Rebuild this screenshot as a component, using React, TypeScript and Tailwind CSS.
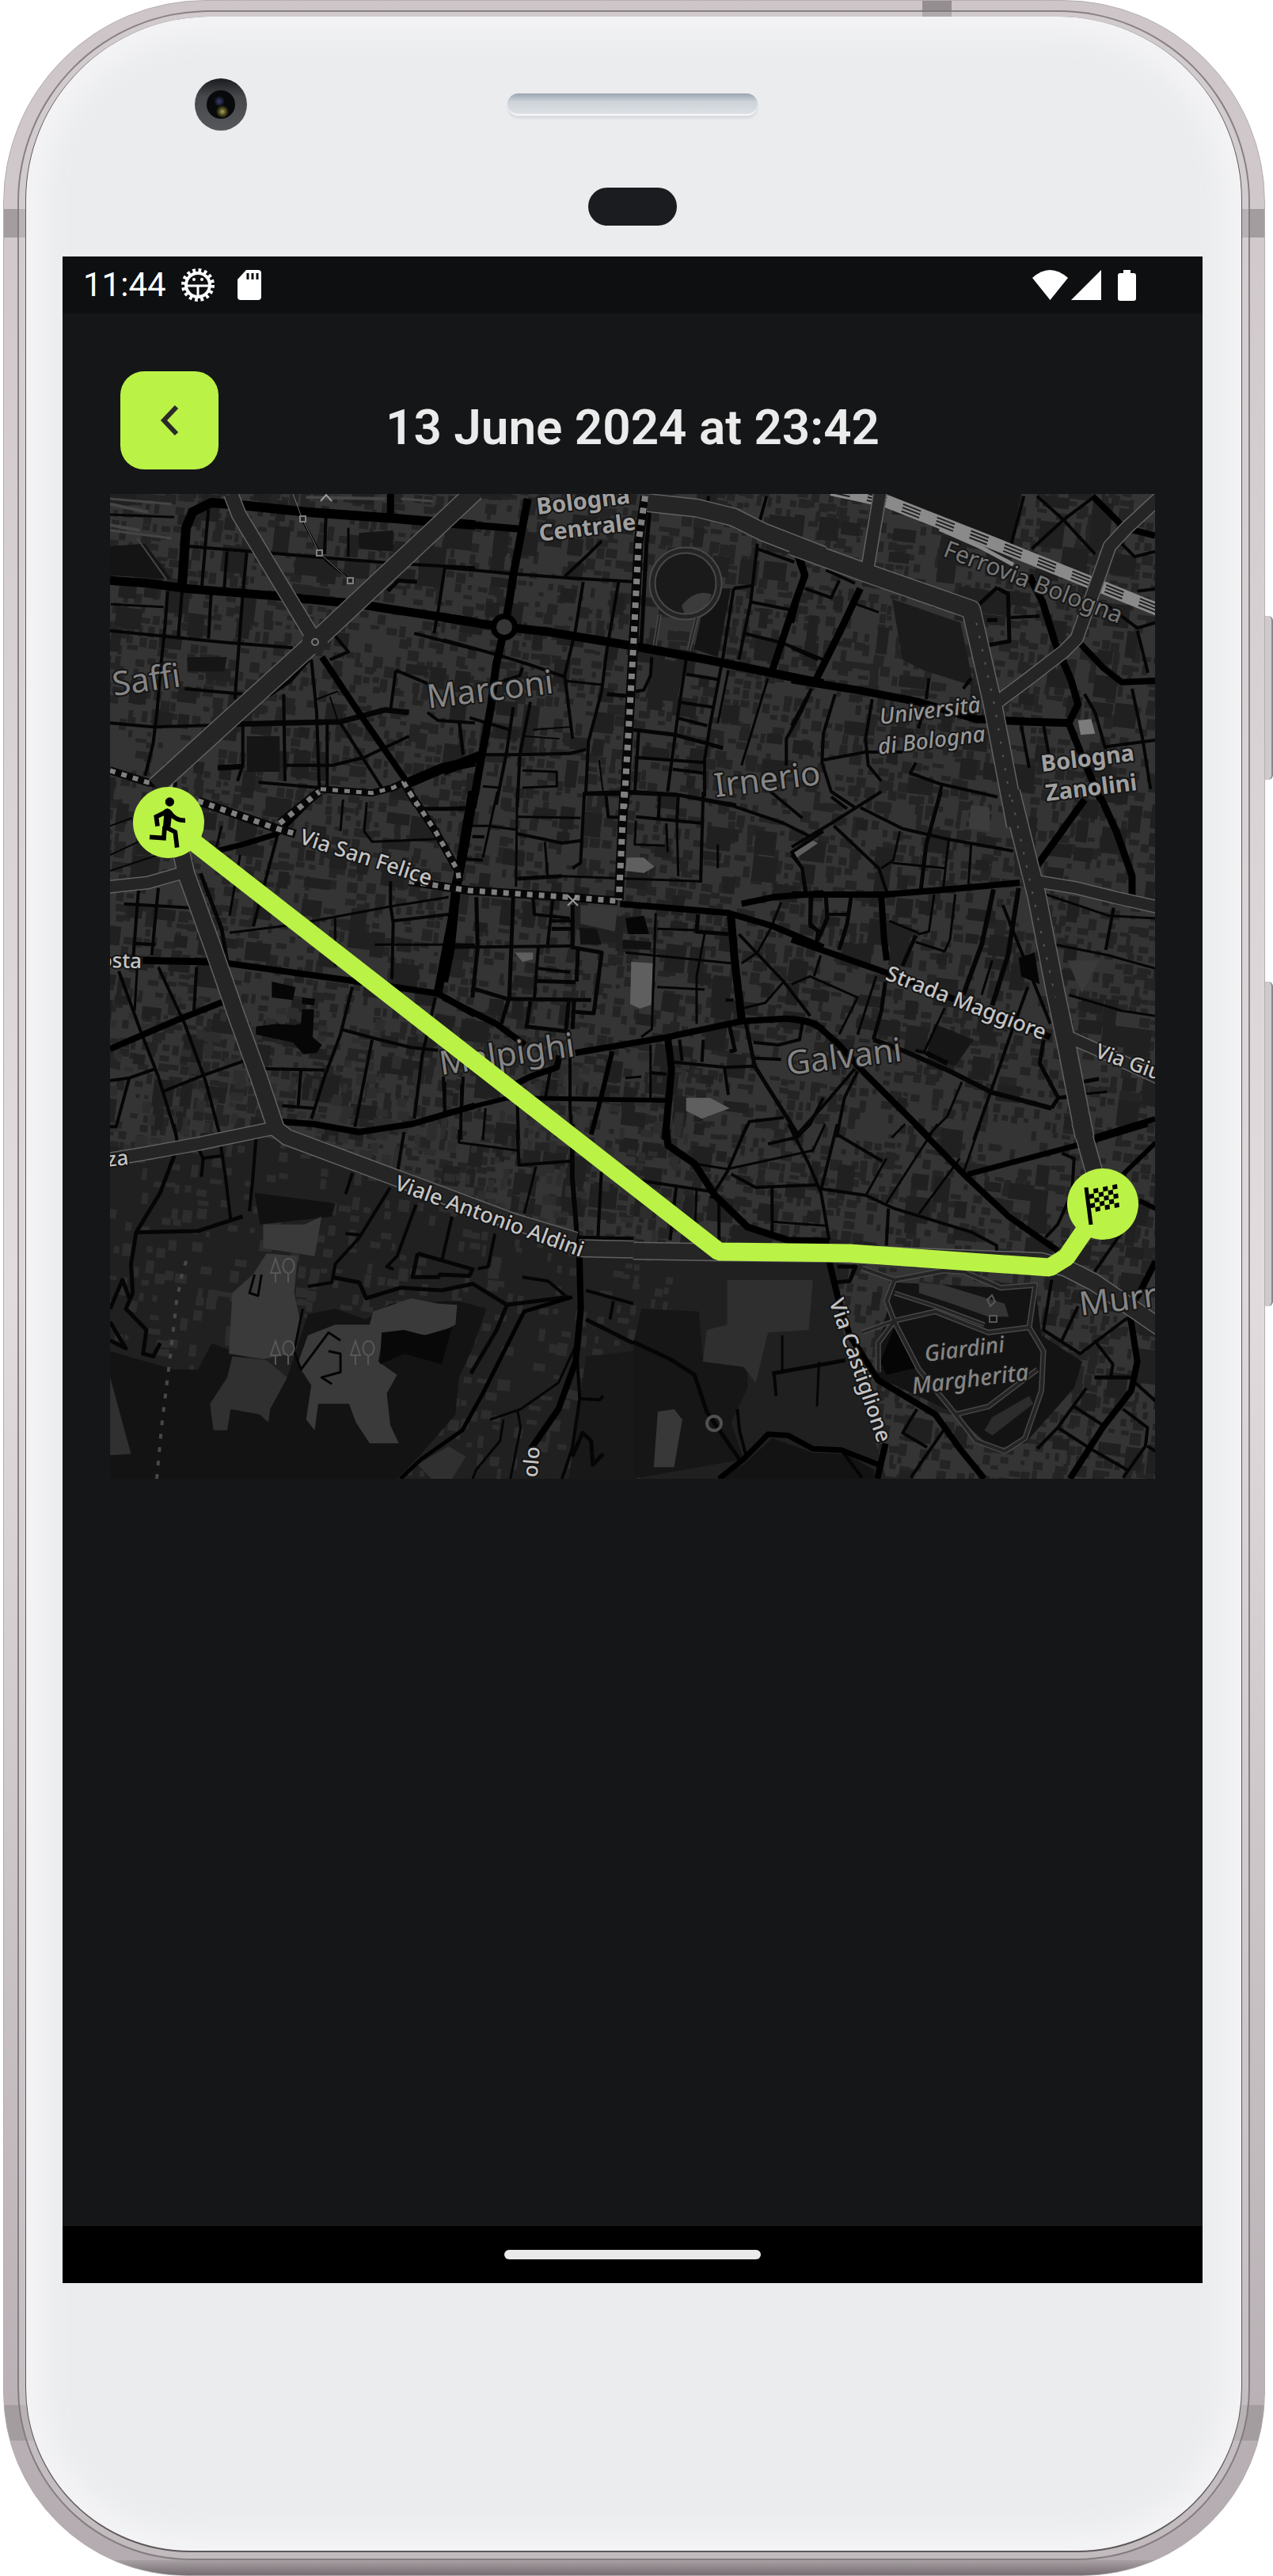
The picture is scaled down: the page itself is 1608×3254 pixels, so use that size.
import React from 'react';

type Tile = [number, number, number, number];
type Line = [Tile, number, string];

// Survey sheets: origin x, origin y, units per pixel across, units per pixel down.
const A: Tile = [-19, -24, 3, 3];
const B: Tile = [421, -24, 3, 3];
const C: Tile = [861, -24, 3, 3];
const D: Tile = [-19, 376, 3, 3];
const E: Tile = [421, 376, 3, 3];
const F: Tile = [861, 376, 3, 3];
const G: Tile = [-19, 796, 2.306, 3];
const H: Tile = [661, 796, 1.94, 3];

const toPoints = ([ox, oy, sx, sy]: Tile, pts: string) =>
  pts
    .split(' ')
    .map((p) => {
      const [x, y] = p.split(',').map(Number);
      return `${(x / sx + ox).toFixed(1)},${(y / sy + oy).toFixed(1)}`;
    })
    .join(' ');

const majorRoads: Line[] = [
  [A, 11, '57,400 200,410 340,430 700,460 1000,490 1440,558'],
  [A, 12, '330,420 345,200 370,140 440,105 560,115 800,140 1140,165 1440,190'],
  [A, 9, '1120,72 1120,160'],
  [A, 8, '860,690 1000,900 1180,1160'],
  [A, 13, '1180,1170 1320,1110 1440,1085'],
  [B, 11, '0,540 150,565 230,575 400,595 700,645 1000,700 1440,790'],
  [B, 9, '0,180 290,205'],
  [B, 10, '320,90 265,380 250,480 232,580 200,720 180,880 150,1040 110,1260'],
  [B, 13, '0,1120 140,1065'],
  [B, 9, '1350,310 1370,380 1320,520 1240,760'],
  [C, 10, '0,775 250,815 480,860 700,925 900,935 1050,940'],
  [C, 9, '260,430 180,600 90,780'],
  [C, 6, '20,310 45,380 0,560'],
  [C, 9, '900,380 950,480 1000,640 1060,780 1085,870 1050,940 1090,1040 1170,1230'],
  [C, 8, '1085,630 1180,730 1250,785 1377,780'],
  [C, 8, '1140,80 1260,200 1377,230'],
  [D, 11, '1430,0 1380,300 1350,500 1300,760'],
  [D, 8, '500,650 960,715 1300,765 1440,845'],
  [D, 8, '57,975 300,870 490,795'],
  [D, 9, '180,640 440,645'],
  [D, 8, '700,1250 830,1260 1000,1290 1200,1260 1440,1190'],
  [D, 7, '400,240 560,200 690,160 850,0'],
  [E, 12, '115,0 80,200 50,350 25,600 0,720'],
  [E, 8, '670,425 1080,460 1250,510 1440,590'],
  [E, 8, '1130,425 1250,400 1440,385'],
  [E, 10, '1090,470 1105,650 1130,860'],
  [E, 8, '500,990 850,930 1130,870 1300,860 1380,870 1440,900'],
  [E, 9, '850,930 865,1050 840,1320'],
  [E, 8, '0,780 200,880 310,960'],
  [E, 6, '0,1220 250,1160 850,1170'],
  [E, 8, '250,1120 330,1080 430,1045 440,1000'],
  [E, 6, '640,985 600,1150 560,1300'],
  [F, 8, '0,560 370,690 980,930'],
  [F, 8, '0,390 350,390 600,370 865,345'],
  [F, 8, '0,860 90,880 180,960 270,1060 520,1310'],
  [F, 9, '1110,30 930,280'],
  [F, 9, '1170,20 1230,150 1290,320 1290,400'],
  [F, 8, '340,400 350,560 360,640'],
  [F, 7, '1150,1310 1377,1240'],
  [G, 8, '1410,440 1415,700 1400,900 1350,1080 1270,1230'],
  [G, 5, '890,1344 950,1270 1070,1160 1130,1020 1250,710 1390,655'],
  [H, 8, '690,0 810,190 920,350 1040,480'],
  [H, 7, '820,190 1100,75 1260,0'],
  [H, 9, '80,0 85,80 150,150 200,270 280,390 380,440 480,445'],
  [H, 8, '480,520 500,650 530,800 600,970 740,1100 800,1230 860,1344'],
  [H, 7, '210,1344 270,1270 330,1175 380,1180 440,1230 510,1235 600,1290'],
  [H, 8, '598,1344 618,1210'],
  [H, 8, '1280,520 1240,640 1215,700 1235,900 1220,1010 1150,1150 1070,1344'],
  [H, 6, '1280,70 1200,190'],
  [H, 6, '1240,290 1280,320'],
];

const minorRoads: Line[] = [
  [A, 4, '350,270 600,290 950,320 1140,335 1440,352'],
  [A, 4, '430,130 405,420'], [A, 4, '500,290 490,430'], [A, 4, '575,295 560,450 530,850'],
  [A, 4, '875,160 870,300'], [A, 3, '960,200 960,310'], [A, 3, '870,320 970,400'],
  [A, 3, '780,160 850,290'], [A, 4, '57,590 300,615 500,635 750,655'],
  [A, 4, '275,440 265,580 250,720 235,900 220,1020 190,1140'],
  [A, 4, '330,440 315,620'], [A, 4, '440,450 430,620'], [A, 4, '340,810 560,830'],
  [A, 4, '57,940 220,955 560,945'], [A, 7, '500,945 720,940 930,935 1100,890 1190,900'],
  [A, 5, '660,835 740,780 810,700'], [A, 4, '715,830 720,1160'], [A, 4, '820,700 840,900 850,1190'],
  [A, 4, '560,950 560,1100 540,1160'], [A, 7, '465,1110 560,1105'], [A, 4, '725,1100 900,1100 1020,1070 1190,990'],
  [A, 4, '930,940 1090,1190'], [A, 4, '880,940 880,1190'], [A, 4, '620,1165 850,1185'],
  [A, 4, '1325,355 1300,520 1285,600'], [A, 4, '910,610 960,670 890,700'], [A, 4, '900,600 990,520'],
  [A, 4, '1210,600 1440,660'], [A, 4, '1140,740 1120,890'], [A, 4, '1140,740 1260,790'],
  [A, 4, '1260,900 1300,930 1440,940'], [A, 4, '1380,930 1395,1060'], [A, 5, '1110,440 1150,400 1220,405'],
  [A, 2, '840,850 920,820'], [A, 2, '890,840 920,930'], [A, 3, '60,490 260,500'], [A, 3, '57,150 300,160'],
  [B, 4, '0,350 270,375 470,390 730,405'], [B, 4, '460,385 540,310 600,250'], [B, 4, '530,405 500,590 460,760 490,1000'],
  [B, 4, '665,400 620,660 600,820 550,1010 540,1200'], [B, 4, '0,625 200,680 330,720 460,765'],
  [B, 3, '460,780 600,795'], [B, 5, '620,830 700,838'], [B, 4, '790,690 785,760 760,815 730,820'],
  [B, 5, '785,110 770,260 750,640'], [B, 4, '920,700 890,900 870,1050 850,1200'],
  [B, 4, '1190,260 1165,480 1120,700'], [B, 4, '1100,430 1060,690 1010,950 990,1080 990,1220'],
  [B, 4, '1100,430 1170,420'], [B, 4, '1160,480 1310,510'], [B, 4, '1140,600 1280,635 1440,700'],
  [B, 4, '1190,280 1330,330'], [B, 3, '1080,740 1040,940'], [B, 3, '1230,770 1130,1100'],
  [B, 4, '1395,810 1360,890 1300,1000 1300,1100'], [B, 4, '920,755 1040,775'], [B, 4, '890,860 1020,880'],
  [B, 4, '885,920 1000,950'], [B, 5, '720,965 880,985 990,1015 1060,1035'], [B, 4, '740,970 725,1210'],
  [B, 4, '725,1070 990,1090'], [B, 4, '870,1115 990,1130'], [B, 4, '540,1205 720,1200 880,1210 1110,1250'],
  [B, 4, '150,1060 290,1060 480,1055 540,1040'], [B, 4, '265,880 240,1050 200,1250'], [B, 4, '330,860 290,1060 280,1260'],
  [B, 4, '60,930 75,1060'], [B, 4, '100,920 250,965'], [B, 3, '300,1120 430,1125 430,1180 300,1185'],
  [B, 3, '150,1180 210,1185'], [B, 2, '310,990 440,1000'], [B, 2, '340,965 480,955'], [B, 2, '590,1080 605,1200'],
  [B, 4, '1005,80 1000,120'], [B, 4, '1225,80 1195,190'], [B, 4, '300,730 290,760 200,790'],
  [C, 4, '880,80 830,270'], [C, 4, '930,80 1030,170 1150,300'], [C, 4, '1150,80 1030,170 910,280'],
  [C, 4, '1250,260 1300,310 1377,290'], [C, 4, '830,540 940,535'], [C, 5, '780,430 820,450 825,630 745,645'],
  [C, 5, '780,425 700,500'], [C, 5, '740,550 780,550'], [C, 4, '0,655 100,700'],
  [C, 4, '75,810 0,950'], [C, 4, '165,830 120,980 115,1090 150,1200 240,1260'],
  [C, 4, '305,850 280,1000 290,1100 340,1160'], [C, 4, '120,1080 280,1050 420,1050'],
  [C, 4, '520,770 510,850'], [C, 4, '510,860 480,960'], [C, 4, '470,1090 450,1130 560,1170 780,1220'],
  [C, 4, '570,1170 550,1260'], [C, 4, '870,950 900,1110'], [C, 4, '955,950 980,1090'],
  [C, 4, '1110,830 1150,900 1190,1040'], [C, 4, '1190,1030 1377,1005'], [C, 4, '1290,810 1330,1000 1360,1190'],
  [C, 4, '1310,590 1350,750'], [C, 4, '1190,490 1310,580 1377,560'], [C, 4, '1310,440 1377,432'],
  [C, 3, '230,485 330,520'], [C, 4, '130,360 240,410'], [C, 4, '50,430 150,465 180,400'], [C, 4, '650,810 680,770'],
  [D, 3, '550,240 510,470'], [D, 4, '690,170 600,510'], [D, 5, '400,310 480,520 500,640'],
  [D, 4, '110,425 360,440'], [D, 4, '165,370 145,630'], [D, 4, '240,365 215,620'], [D, 4, '150,575 230,580'],
  [D, 4, '90,680 170,900 240,1080 310,1310'], [D, 4, '240,665 340,880 420,1100 470,1290'],
  [D, 4, '385,665 375,830'], [D, 3, '160,670 150,830'], [D, 4, '57,1095 130,1085 230,1050'],
  [D, 4, '130,1085 80,1270 57,1270'], [D, 4, '260,1135 410,1075 580,1015'],
  [D, 4, '640,1050 870,1055'], [D, 4, '780,1055 770,1190'], [D, 4, '975,740 930,920 870,1080 820,1240'],
  [D, 4, '930,900 1060,935 1200,970 1300,980'], [D, 4, '1050,940 985,1270'], [D, 4, '1290,780 1240,1000 1210,1240'],
  [D, 4, '710,1190 830,1200'], [D, 4, '1120,340 1120,430 1130,500 1125,710'], [D, 3, '510,535 750,505 1120,435 1340,400'],
  [D, 4, '1130,490 1340,465'], [D, 3, '910,480 910,660'], [D, 3, '940,30 930,150'], [D, 3, '1030,40 1020,150 1050,190 1290,180'],
  [D, 5, '1240,65 1400,65'], [D, 4, '1320,1080 1325,1200'], [D, 4, '1395,1080 1390,1190'], [D, 3, '480,130 460,210'],
  [D, 3, '1060,580 1440,580'], [D, 2, '57,130 140,100'], [D, 2, '57,240 250,150'], [D, 2, '57,300 300,220'],
  [E, 4, '0,65 90,60'], [E, 3, '205,0 150,250'], [E, 3, '280,0 275,360'], [E, 3, '80,130 170,130 280,145'],
  [E, 3, '280,95 520,100'], [E, 4, '280,160 380,180 450,195 525,185'], [E, 4, '535,0 520,270 490,290'],
  [E, 4, '110,170 155,172'], [E, 4, '80,255 150,260'], [E, 3, '385,190 395,320'], [E, 5, '280,330 450,320'],
  [E, 3, '450,320 970,340'], [E, 4, '615,0 625,95 680,100'], [E, 4, '535,10 680,10'], [E, 4, '985,0 975,345'],
  [E, 4, '730,95 985,120'], [E, 4, '820,10 815,100'], [E, 4, '890,20 885,105'], [E, 3, '730,110 725,200 840,205'],
  [E, 3, '845,120 850,230'], [E, 3, '885,110 890,320'], [E, 4, '700,5 900,15 1100,55 1290,120 1390,170'],
  [E, 4, '1240,0 1360,100'], [E, 4, '1440,150 1320,230 1360,290 1375,380'], [E, 3, '1040,200 1040,290'],
  [E, 5, '125,400 130,590 110,780'], [E, 5, '265,400 250,780 220,880'], [E, 4, '340,400 345,465 480,480'],
  [E, 4, '415,410 395,580'], [E, 5, '490,430 490,590 600,610 570,840 500,835'], [E, 5, '410,520 490,520'],
  [E, 4, '410,490 490,490'], [E, 4, '0,590 490,585'], [E, 4, '360,590 345,780'], [E, 4, '360,670 480,685'],
  [E, 5, '355,718 500,722'], [E, 5, '510,600 505,720'], [E, 5, '110,745 240,785 560,790'],
  [E, 5, '330,795 315,890 480,910'], [E, 5, '475,790 465,900'], [E, 5, '495,790 490,900'],
  [E, 3, '805,460 790,900 750,930'], [E, 5, '965,465 960,530 1080,540'], [E, 3, '810,520 960,525'],
  [E, 3, '690,610 1090,650'], [E, 3, '810,740 990,750'], [E, 3, '990,540 960,700 960,880'],
  [E, 4, '1100,790 1070,790'], [E, 4, '895,940 905,1020'], [E, 4, '985,940 980,1025'], [E, 5, '1085,890 1105,980 1085,985'],
  [E, 4, '875,1025 1070,1045 1180,1040'], [E, 4, '1065,1045 1080,1150'], [E, 5, '1145,870 1180,1040 1230,1120 1350,1310'],
  [E, 4, '1175,950 1270,960 1350,940 1360,880'], [E, 4, '1180,1010 1280,1015'], [E, 4, '1440,1160 1390,1260 1330,1320'],
  [E, 4, '1130,1310 1160,1250 1290,1235'], [E, 3, '785,960 785,1170'], [E, 4, '785,1065 845,1070'], [E, 3, '690,1085 750,1080'],
  [E, 4, '480,1000 480,1200 490,1320'], [E, 4, '405,1060 385,1170'], [E, 4, '280,1170 285,1320'], [E, 4, '70,1110 65,1320'],
  [E, 3, '160,1200 150,1320'], [E, 4, '5,1100 5,1230'], [E, 4, '1120,540 1290,720 1390,850'], [E, 3, '1130,650 1190,610 1240,520 1280,420'],
  [E, 3, '1140,820 1220,800 1290,720'], [E, 4, '1390,400 1390,510 1430,530 1410,580'],
  [F, 4, '150,20 210,65'], [F, 4, '0,210 150,120 340,0'], [F, 4, '160,130 330,290 360,380'],
  [F, 4, '260,60 420,140 590,180 840,225'], [F, 5, '565,0 510,200 490,370'], [F, 3, '410,150 385,260 340,290'],
  [F, 3, '595,180 575,360'], [F, 3, '680,200 670,350'], [F, 3, '380,270 580,290'], [F, 4, '0,240 40,290 50,380'],
  [F, 5, '75,400 70,500 100,530 95,570'], [F, 5, '130,400 135,480 100,560'], [F, 4, '130,465 210,465'],
  [F, 5, '225,400 210,500 180,600'], [F, 3, '540,390 520,530 480,540'], [F, 3, '620,390 600,560 580,605 470,570'],
  [F, 3, '370,490 480,535'], [F, 5, '470,545 420,660'], [F, 6, '765,370 720,580 650,770'], [F, 6, '860,365 820,620 760,810'],
  [F, 3, '110,620 85,700'], [F, 3, '0,730 70,700 250,780 180,920'], [F, 3, '320,700 250,920'], [F, 5, '355,720 340,830 310,940'],
  [F, 6, '310,940 430,985 600,1060 760,1140 985,1200'], [F, 3, '580,820 500,990'], [F, 6, '510,990 590,1030'],
  [F, 4, '895,740 830,920 750,1150 690,1320'], [F, 5, '955,940 940,1030 1010,1160 985,1200'], [F, 5, '1010,1160 1060,1155'],
  [F, 4, '240,1050 120,1190 20,1300'], [F, 4, '250,1060 200,1160 170,1310'], [F, 3, '645,1100 590,1230 520,1300'],
  [F, 3, '430,1260 380,1310'], [F, 5, '1100,1100 1165,1088'], [F, 3, '1110,1145 1195,1138'], [F, 4, '800,430 980,880'],
  [F, 3, '1000,580 1200,620 1377,670'], [F, 3, '1050,770 1250,830 1377,850'], [F, 3, '950,385 1200,470 1377,480'],
  [F, 4, '1220,440 1190,600'], [F, 4, '510,990 470,980'], [F, 3, '760,640 720,770'],
  [G, 4, '230,0 240,70'], [G, 4, '365,70 380,200 395,360'], [G, 5, '235,105 190,260 120,410 105,530 110,640 90,700 150,780 140,870 170,880 190,830'],
  [G, 5, '120,410 300,405 430,350'], [G, 4, '470,40 460,200 450,330'], [G, 4, '300,90 315,130 310,200'], [G, 4, '310,130 370,120'],
  [G, 4, '750,185 730,265'], [G, 4, '860,240 770,430 700,530 690,600 620,615'], [G, 4, '730,415 770,420'],
  [G, 4, '935,305 880,500 850,540 870,550'], [G, 4, '1040,350 1010,520'], [G, 4, '1165,415 1145,540 1115,548'],
  [G, 5, '940,490 1100,550 1090,575 1005,570 1000,580 925,580 940,490'], [G, 5, '690,580 770,600 790,660 890,620 1010,630 1100,605 1200,685 1380,655'],
  [G, 4, '1245,580 1320,595 1370,650'], [G, 5, '1200,685 1170,780 1095,945'], [G, 3, '605,700 580,860 600,930 680,790 715,820'],
  [G, 3, '680,860 715,870 715,940 660,960 690,985'], [G, 4, '900,30 880,190'], [G, 4, '1230,20 1235,155 1385,140'],
  [G, 6, '1390,0 1390,200 1405,440'], [G, 3, '1060,20 1060,70 1230,100'], [G, 4, '1210,345 1400,420'], [G, 3, '1285,160 1250,340'],
  [G, 4, '1475,180 1465,430'], [G, 5, '1410,430 1568,435'], [G, 4, '1430,630 1568,680'], [G, 5, '1430,740 1568,830'],
  [G, 4, '1510,670 1500,740'], [G, 4, '1405,900 1412,1040 1390,1230 1360,1344'], [G, 4, '1410,1040 1470,1045 1480,1030'],
  [G, 5, '1390,1260 1420,1170 1445,1200 1450,1290 1480,1250'], [G, 3, '1400,840 1350,980 1240,1080 1150,1120'],
  [G, 3, '1190,1120 1180,1200 1110,1310 1100,1344'], [G, 3, '1230,1080 1240,1150 1210,1344'], [G, 5, '44,700 80,590 100,660'],
  [G, 5, '44,750 90,850 44,820'], [G, 3, '465,570 450,640 475,650 485,570'],
  [H, 4, '380,0 430,150 460,260 480,440'], [H, 4, '500,0 460,250'], [H, 3, '470,0 440,100 230,170 150,150'],
  [H, 4, '280,0 230,180 190,280'], [H, 4, '240,190 300,240 450,230'], [H, 4, '330,75 400,50'], [H, 4, '500,40 610,140'],
  [H, 4, '460,245 570,270 640,320 830,410 890,460 890,490'], [H, 3, '620,130 570,270'], [H, 3, '745,0 620,300'],
  [H, 3, '800,130 700,340'], [H, 4, '625,320 620,460'], [H, 4, '340,235 340,410'], [H, 3, '340,370 470,385'],
  [H, 4, '210,280 210,440'], [H, 4, '0,210 190,255'], [H, 4, '105,240 90,440'], [H, 3, '155,250 150,430'], [H, 3, '850,0 810,180'],
  [H, 4, '1050,110 1080,130 1075,260 1040,380 1010,430'], [H, 4, '1210,380 1130,560'], [H, 4, '1025,590 1005,780 1095,870 1210,735'],
  [H, 4, '1090,690 1050,820'], [H, 4, '1130,820 1175,910 1170,960'], [H, 5, '1130,960 1225,960'], [H, 4, '1110,1000 1040,1150 990,1230'],
  [H, 4, '1080,1070 1150,1140'], [H, 4, '1040,1150 1120,1230 1210,1310'], [H, 4, '1200,1080 1260,1150 1255,1220 1200,1340'],
  [H, 4, '1230,980 1280,1050'], [H, 4, '1260,1220 1280,1240'], [H, 5, '340,945 520,895'], [H, 4, '345,945 350,1030'],
  [H, 3, '365,800 365,940'], [H, 3, '455,900 450,1070'], [H, 5, '0,825 90,890 150,950 180,1090 260,1270'],
  [H, 4, '255,1080 260,1160 275,1250'], [H, 4, '695,1080 660,1170 720,1225'], [H, 4, '760,1160 680,1340'],
  [H, 5, '490,600 530,595 545,540 500,540'], [H, 4, '510,1235 560,1340'],
];

const trunkRoads: Line[] = [
  [A, 22, '1440,62 835,630 230,1180'],
  [A, 17, '515,72 545,150 835,630'],
  [B, 21, '775,105 960,125 1100,160 1210,215 1440,305'],
  [C, 22, '0,268 280,370 680,510 760,860 850,1330'],
  [C, 15, '340,40 285,370'],
  [C, 15, '1400,80 1270,200 1205,270 1170,370 1130,480 1080,620 1030,670 900,770 780,860'],
  [D, 20, '320,200 345,310 450,600 540,860 620,1080 690,1290'],
  [D, 14, '40,362 200,345 340,305'],
  [F, 22, '830,0 880,200 930,400 1000,760 1040,950 1110,1310'],
  [F, 14, '930,340 1080,365 1220,400 1400,440'],
  [F, 14, '1050,930 1140,970 1400,1090'],
  [G, 15, '540,10 300,75 130,115 20,138'],
  [G, 19, '520,10 560,50 880,205 1220,370 1400,440'],
  [G, 20, '1410,470 1568,475'],
  [H, 20, '1095,-10 1140,240'],
  [H, 20, '0,480 200,485 480,490 1000,520 1060,545 1130,600 1300,780'],
];

const dottedRoads: Line[] = [
  [A, 8, '57,1120 200,1165 310,1180'],
  [D, 9, '390,35 690,140 760,160'],
  [D, 9, '700,120 850,0'],
  [A, 7, '855,1190 1050,1205 1130,1185 1170,1165'],
  [A, 8, '1170,1165 1220,1250'],
  [D, 8, '1190,0 1290,150 1375,300 1380,340'],
  [E, 9, '-130,340 100,375 480,400 660,415'],
  [B, 10, '765,80 740,250 720,650 700,1000 685,1260'],
  [E, 10, '685,0 665,410'],
];

const parkPaths: Line[] = [
  [B, 3, '820,530 800,650'], [B, 3, '960,540 930,665'],
  [H, 5, '560,545 640,590 760,555 810,560 900,620 985,610 970,770 870,790 740,710 640,745 600,830 600,940'],
  [H, 5, '640,590 620,670 640,750 700,930 790,1100 870,1070 990,930'],
  [H, 5, '970,770 1005,860 1000,1010 960,1190 910,1240 840,1200 790,1100'],
  [H, 4, '560,790 640,745'], [H, 4, '640,640 740,690 860,760'],
];

const clearings: [Tile, string, string][] = [
  [A, '#141414', '57,270 190,260 290,395 57,380'],
  [A, '#151515', '350,690 500,690 490,745 350,745'],
  [A, '#151515', '575,990 700,990 700,1125 575,1125'],
  [A, '#151515', '1000,220 1130,210 1130,290 1000,280'],
  [B, '#202020', '800,695 915,710 885,860 765,845'],
  [B, '#141414', '1000,430 1090,430 1040,690 950,660'],
  [C, '#161616', '360,72 870,72 830,260 640,190'],
  [C, '#1b1b1b', '380,470 640,560 690,800 500,740 420,700'],
  [C, '#7b7b7b', '1085,930 1135,925 1150,980 1095,985'],
  [D, '#060606', '670,720 760,740 750,790 670,780'],
  [D, '#060606', '785,780 835,785 830,810 785,805'],
  [D, '#060606', '785,825 830,825 825,930 860,960 840,990 790,995 750,950 610,920 610,890 690,880 755,885 780,880'],
  [E, '#383838', '520,430 660,440 650,530 520,500'],
  [E, '#111111', '515,515 580,520 600,580 520,580'],
  [E, '#111111', '680,560 790,570 785,600 680,595'],
  [E, '#060606', '690,480 760,470 780,540 700,540'],
  [E, '#5f5f5f', '712,645 795,650 788,808 745,822 708,805'],
  [E, '#5f5f5f', '695,250 760,250 800,285 760,308 690,300'],
  [E, '#5f5f5f', '270,610 340,610 340,635 300,645'],
  [E, '#5f5f5f', '920,1160 1010,1160 1085,1200 1030,1220 980,1240 920,1210'],
  [E, '#5f5f5f', '1330,230 1400,185 1420,195 1340,250'],
  [F, '#161616', '540,880 690,940 620,1040 510,1000'],
  [F, '#3a3a3a', '1045,640 1165,640 1100,765'],
  [F, '#3c3c3c', '680,50 750,60 750,150 670,140'],
  [F, '#050505', '860,630 920,610 940,730 870,700'],
  [G, '#111111', '465,260 700,300 690,350 480,380'],
  [G, '#131313', '44,860 230,930 300,930 340,830 420,870 560,960 620,720 700,700 790,740 860,680 1060,670 1140,700 1100,850 1060,960 1050,1100 950,1250 880,1344 44,1344'],
  [G, '#3a3a3a', '500,490 590,500 580,640 600,760 575,870 490,890 390,870 400,640 460,570'],
  [G, '#303030', '400,880 500,895 560,960 510,1080 505,1130 480,1100 395,1080 385,1160 345,1160 335,1060 385,960'],
  [G, '#3a3a3a', '490,380 610,380 660,350 640,500 490,470'],
  [G, '#3a3a3a', '620,800 700,760 800,760 810,710 920,660 1000,680 1055,685 1050,760 990,800 840,790 825,900 880,950 850,1020 860,1140 885,1210 800,1210 760,1130 740,1060 650,1060 640,1160 615,1120 630,990 590,910'],
  [G, '#080808', '835,790 900,780 960,800 1040,770 1010,910 900,870 830,910'],
  [G, '#303030', '44,960 105,1250 44,1255'],
  [G, '#303030', '940,1290 1030,1220 1080,1260 1040,1344 980,1344'],
  [G, '#181818', '1430,880 1568,860 1568,1344 1380,1344'],
  [H, '#161616', '20,700 160,710 170,880 280,880 280,1000 240,1130 270,1270 0,1344 0,830'],
  [H, '#2f2f2f', '230,590 440,590 430,780 330,790 300,980 270,920 170,900 180,780 230,760'],
  [H, '#131313', '640,600 900,620 985,620 1000,800 1100,900 1080,1000 960,1210 880,1230 780,1090 600,960 600,840'],
  [H, '#343434', '700,600 760,610 910,680 920,730 870,730 780,680 700,640'],
  [H, '#050505', '640,770 700,920 620,950 605,900'],
  [H, '#2c2c2c', '860,1160 880,1110 970,1030 980,1060 880,1180'],
  [H, '#131313', '270,1290 340,1190 440,1245 520,1250 590,1310 590,1344 210,1344'],
  [H, '#383838', '60,1090 100,1080 120,1120 100,1300 50,1300'],
];

// Deterministic scatter of building footprints, turned with the street grid.
function footprints(seed: number, x0: number, y0: number, x1: number, y1: number, step: number, density: number) {
  let s = seed;
  const rnd = () => {
    s = (s * 16807) % 2147483647;
    return s / 2147483647;
  };
  let d = '';
  for (let y = y0; y < y1; y += step) {
    for (let x = x0; x < x1; x += step) {
      if (rnd() > density) continue;
      const w = step * (0.35 + rnd() * 0.8);
      const h = step * (0.35 + rnd() * 0.8);
      d += `M${(x + rnd() * 5).toFixed(0)} ${(y + rnd() * 5).toFixed(0)}h${w.toFixed(0)}v${h.toFixed(0)}h-${w.toFixed(0)}z`;
    }
  }
  return d;
}

const cityBlocks = footprints(11, -80, -120, 1400, 1400, 13, 0.62);
const cityYards = footprints(97, -80, -120, 1400, 1400, 31, 0.35);
const villas = footprints(53, -80, 700, 760, 1400, 14, 0.3);

function Roads({ lines, color, grow = 0, dash }: { lines: Line[]; color: string; grow?: number; dash?: string }) {
  return (
    <g fill="none" stroke={color} strokeLinejoin="round" strokeDasharray={dash}>
      {lines.map(([t, w, pts], i) => (
        <polyline key={i} points={toPoints(t, pts)} strokeWidth={w + grow} />
      ))}
    </g>
  );
}

type Label = { text: string; x: number; y: number; r: number; size: number; fill: string; weight?: number; italic?: boolean; end?: boolean };

const labels: Label[] = [
  { text: 'Saffi', x: 5, y: 255, r: -8, size: 42, fill: '#858585' },
  { text: 'Marconi', x: 402, y: 271, r: -7, size: 42, fill: '#858585' },
  { text: 'Irnerio', x: 765, y: 383, r: -7, size: 42, fill: '#858585' },
  { text: 'Malpighi', x: 418, y: 734, r: -8, size: 42, fill: '#858585' },
  { text: 'Galvani', x: 856, y: 734, r: -7, size: 42, fill: '#858585' },
  { text: 'Murr', x: 1226, y: 1038, r: -7, size: 42, fill: '#858585' },
  { text: 'Bologna', x: 540, y: 26, r: -7, size: 29, fill: '#a0a0a0', weight: 700 },
  { text: 'Centrale', x: 543, y: 60, r: -7, size: 29, fill: '#a0a0a0', weight: 700 },
  { text: 'Ferrovia Bologna', x: 1051, y: 78, r: 21, size: 30, fill: '#777777' },
  { text: 'Università', x: 973, y: 291, r: -7, size: 28, fill: '#969696', italic: true, weight: 500 },
  { text: 'di Bologna', x: 971, y: 329, r: -7, size: 28, fill: '#969696', italic: true, weight: 500 },
  { text: 'Bologna', x: 1177, y: 351, r: -7, size: 29, fill: '#a0a0a0', weight: 700 },
  { text: 'Zanolini', x: 1183, y: 388, r: -7, size: 29, fill: '#a0a0a0', weight: 700 },
  { text: 'Via San Felice', x: 238, y: 441, r: 18, size: 27, fill: '#c4c4c4', weight: 500 },
  { text: 'Strada Maggiore', x: 978, y: 613, r: 21, size: 27, fill: '#c4c4c4', weight: 500 },
  { text: 'Via Giu', x: 1243, y: 711, r: 20, size: 26, fill: '#c4c4c4', weight: 500 },
  { text: 'osta', x: 40, y: 599, r: 1, size: 26, fill: '#c4c4c4', end: true, weight: 500 },
  { text: 'za', x: 24, y: 847, r: -6, size: 26, fill: '#c4c4c4', end: true, weight: 500 },
  { text: 'Viale Antonio Aldini', x: 358, y: 878, r: 20, size: 27, fill: '#c4c4c4', weight: 500 },
  { text: 'Via Castiglione', x: 908, y: 1020, r: 71, size: 27, fill: '#c4c4c4', weight: 500 },
  { text: 'olo', x: 543, y: 1204, r: -85, size: 26, fill: '#c4c4c4', end: true, weight: 500 },
  { text: 'Giardini', x: 1030, y: 1096, r: -7, size: 28, fill: '#858585', italic: true, weight: 500 },
  { text: 'Margherita', x: 1014, y: 1137, r: -7, size: 29, fill: '#858585', italic: true, weight: 500 },
];

const route = '74,415 769,957 934,959 1187,977 1208,964 1254,897';

function RouteMap() {
  return (
    <svg viewBox="0 0 1320 1244" className="block h-auto w-full" role="img" aria-label="Run route across Bologna">
      <rect width="1320" height="1244" fill="#343434" />
      <g transform="rotate(7 660 622)">
        <path d={cityBlocks} fill="#242424" />
        <path d={cityYards} fill="#202020" />
      </g>
      <polygon points={toPoints(G, '44,130 470,40 560,70 870,220 1400,470 1568,490 1568,1344 44,1344')} fill="#202020" />
      <polygon points={toPoints(H, '0,490 470,490 520,820 620,1344 0,1344')} fill="#202020" />
      <g transform="rotate(7 660 622)">
        <path d={villas} fill="#2d2d2d" />
      </g>
      {clearings.map(([t, fill, pts], i) => (
        <polygon key={i} points={toPoints(t, pts)} fill={fill} />
      ))}

      {/* Rail yard */}
      <Roads lines={[[A, 3, '57,90 290,110'], [A, 4, '57,110 200,140'], [A, 3, '57,210 290,240'], [A, 4, '57,190 170,210'], [A, 2, '160,240 270,395'], [A, 4, '800,85 1100,90'], [A, 3, '1160,90 1280,100']]} color="#454545" />

      {/* Montagnola gardens */}
      <circle cx="727" cy="113" r="42" fill="#1a1a1a" />
      <path d="M722 141q18-22 38-14q-6 24-34 25z" fill="#3b3b3b" />
      <circle cx="727" cy="113" r="42" fill="none" stroke="#484848" strokeWidth="9" />
      <circle cx="727" cy="113" r="42" fill="none" stroke="#242424" strokeWidth="5" />

      <Roads lines={parkPaths} color="#484848" grow={2} />
      <Roads lines={parkPaths} color="#242424" grow={-1} />
      <Roads lines={minorRoads} color="#050505" />
      <Roads lines={majorRoads} color="#000000" />
      <circle cx="498" cy="168" r="17" fill="#000" />
      <circle cx="498" cy="168" r="10" fill="#353535" />

      <Roads lines={dottedRoads} color="#070707" grow={2} />
      <Roads lines={dottedRoads} color="#808080" grow={-2} dash="7 8" />

      {/* Railway */}
      <Roads lines={[[C, 16, '150,55 360,100 780,265 1400,515']]} color="#8a8a8a" />
      <Roads lines={[[C, 2, '155,45 365,88 785,253 1400,501'], [C, 2, '153,55 360,100 780,265 1400,514'], [C, 2, '150,66 355,112 775,277 1400,528']]} color="#202020" dash="24 22" />
      <Roads lines={[[C, 5, '560,205 720,275 840,340']]} color="#8a8a8a" />
      <Roads lines={[[A, 1, '750,72 785,165 850,295 965,400']]} color="#707070" />
      {[[243, 31], [264, 74], [303, 109]].map(([x, y]) => (
        <rect key={x} x={x - 3} y={y - 3} width="7" height="7" fill="#222" stroke="#808080" strokeWidth="2" />
      ))}

      <Roads lines={trunkRoads} color="#626262" grow={3} />
      <Roads lines={trunkRoads} color="#252525" />
      <circle cx="259" cy="186" r="16" fill="#252525" />
      <circle cx="259" cy="187" r="4" fill="none" stroke="#777" strokeWidth="2" />
      <Roads lines={[[C, 2, '700,560 770,880 830,1240'], [F, 2, '835,30 1000,780']]} color="#565656" dash="3 14" />
      <path d="M266 9l7-8 7 8M578 507l13 13m0-13l-13 13" stroke="#999" strokeWidth="2" fill="none" />
      <circle cx="763" cy="1174" r="9" fill="none" stroke="#505050" strokeWidth="4" />
      <path d="M59 1244L66 1170 76 1090 84 1020 92 980 100 960" fill="none" stroke="#484848" strokeWidth="4" strokeDasharray="6 11" />

      {/* Woodland markers */}
      <g fill="none" stroke="#575757" strokeWidth="2">
        {[[203, 966], [203, 1070], [304, 1070]].map(([x, y]) => (
          <path key={`${x}-${y}`} d={`M${x} ${y + 18}l6-18 6 18zm6 0v12m16-12v12m0-12a7 9 0 1 1 1 0`} />
        ))}
        <path d="M1108 1018l6-6 4 8-6 6zm3 20h9v8h-9z" />
      </g>

      {/* Place and street names */}
      {labels.map((l, i) => (
        <text
          key={i}
          transform={`translate(${l.x} ${l.y}) rotate(${l.r})`}
          fontFamily="'Noto Sans', sans-serif"
          fontSize={l.size}
          fontWeight={l.weight ?? 400}
          fontStyle={l.italic ? 'italic' : 'normal'}
          textAnchor={l.end ? 'end' : 'start'}
          fill={l.fill}
          stroke="#151515"
          strokeWidth="4"
          strokeLinejoin="round"
          paintOrder="stroke"
        >
          {l.text}
        </text>
      ))}

      {/* Recorded run */}
      <polyline points={route} fill="none" stroke="#bbf246" strokeWidth="23" strokeLinejoin="bevel" />
      <circle cx="74" cy="415" r="45" fill="#bbf246" />
      <g transform="translate(-19 376) scale(.33333)" fill="none" stroke="#000" strokeWidth="17">
        <circle cx="283" cy="39" r="17" fill="#000" stroke="none" />
        <path d="M259 72q15-16 30 0l2 20-6 48h-28l4-42z" fill="#000" stroke="none" />
        <path d="M277 73l-45 22 5 36M282 76q20 34 60 33M270 136l34 17 7 59M264 132l-3 44-54-4" />
      </g>
      <circle cx="1254" cy="897" r="45" fill="#bbf246" />
      <path d="M1233 876l6 47" stroke="#000" strokeWidth="5" />
      <g transform="matrix(6 -1.2 .6 5.8 1236 879)">
        {Array.from({ length: 30 }, (_, i) => [i % 6, Math.floor(i / 6)])
          .filter(([c, r]) => (c + r) % 2 === 1)
          .map(([c, r]) => (
            <rect key={`${c}-${r}`} x={c} y={r} width="1" height="1" />
          ))}
      </g>
    </svg>
  );
}

function StatusBar() {
  return (
    <div className="flex h-[72px] items-center justify-between bg-[#0e0f11] pl-[26px] pr-[84px] text-white">
      <div className="flex items-center">
        <span className="text-[42px] leading-[72px]">11:44</span>
        <svg className="ml-[18px]" width="44" height="44" viewBox="0 0 44 44" fill="none" stroke="#fff">
          <circle cx="22" cy="22" r="18" strokeWidth="6" strokeDasharray="3.6 3.47" />
          <circle cx="22" cy="22" r="15" strokeWidth="4" />
          <path d="M7 23h30M22 23v15" strokeWidth="3" />
          <circle cx="17" cy="15" r="2" fill="#fff" stroke="none" />
          <circle cx="27" cy="15" r="2" fill="#fff" stroke="none" />
        </svg>
        <svg className="ml-[28px]" width="30" height="38" viewBox="0 0 30 38">
          <path d="M11 0h15q4 0 4 4v30q0 4-4 4H4q-4 0-4-4V12z" fill="#fff" />
          <path d="M13 4v8M19 4v8M25 4v8" stroke="#0e0f11" strokeWidth="3" />
        </svg>
      </div>
      <div className="flex items-center">
        <svg width="45" height="38" viewBox="0 0 45 38" fill="#fff">
          <path d="M0 10Q22 -10 45 10L22.500 38z" />
        </svg>
        <svg className="ml-1" width="38" height="38" viewBox="0 0 38 38" fill="#fff">
          <path d="M38 0v38H0z" />
        </svg>
        <svg className="ml-[21px]" width="23" height="39" viewBox="0 0 23 39" fill="#fff">
          <path d="M7 0h9v4h4q3 0 3 3v29q0 3-3 3H3q-3 0-3-3V7q0-3 3-3h4z" />
        </svg>
      </div>
    </div>
  );
}

function Camera() {
  return (
    <svg width="66" height="66" viewBox="0 0 66 66" aria-hidden="true">
      <defs>
        <linearGradient id="ring" x1="0" y1="0" x2="0" y2="1">
          <stop offset="0" stopColor="#1b1c1f" />
          <stop offset=".35" stopColor="#47484b" />
          <stop offset="1" stopColor="#56575a" />
        </linearGradient>
        <radialGradient id="blueGlint">
          <stop offset="0" stopColor="#3a3f74" />
          <stop offset="1" stopColor="#08090b" />
        </radialGradient>
        <radialGradient id="amberGlint">
          <stop offset="0" stopColor="#a9a26a" />
          <stop offset=".5" stopColor="#55521f" />
          <stop offset="1" stopColor="#0c0c09" />
        </radialGradient>
      </defs>
      <circle cx="33" cy="33" r="33" fill="url(#ring)" />
      <circle cx="33" cy="33" r="18" fill="#08090b" />
      <circle cx="31" cy="29" r="7" fill="url(#blueGlint)" />
      <circle cx="35" cy="42" r="8" fill="url(#amberGlint)" />
    </svg>
  );
}

export default function App() {
  return (
    <div className="flex min-h-screen flex-col bg-white pl-1 pr-[10px] font-['Roboto',sans-serif]">
      <div className="relative flex flex-1 flex-col">
        <div className="absolute right-[-10px] top-[778px] h-[207px] w-5 rounded-r-md border-r-2 border-[#8d8789] bg-[#cfcacb]" />
        <div className="absolute right-[-10px] top-[1240px] h-[410px] w-5 rounded-r-md border-r-2 border-[#8d8789] bg-[#cfcacb]" />

        <div className="relative flex flex-1 flex-col overflow-hidden rounded-t-[256px] rounded-b-[232px] border border-[#b5adb0] bg-linear-to-b from-[#cdc5c8] via-[#e2dcde] via-50% to-[#b3abaf]">
          <div className="absolute inset-x-0 bottom-0 h-[19px] bg-linear-to-b from-[#a8a1a4] to-[#766d72]" />
          <div className="absolute inset-x-0 top-[263px] h-9 bg-[#a49da0]" />
          <div className="absolute inset-x-0 bottom-[170px] h-[45px] bg-[#a49da0]" />
          <div className="absolute right-[395px] top-0 h-10 w-[37px] bg-[#958e91]" />

          <div className="relative mb-[19px] ml-[17px] mr-[18px] mt-[12px] flex flex-1 flex-col rounded-t-[242px] rounded-b-[218px] border-2 border-[#756d71]/80 bg-[#d8d1d4]/40 p-2 pt-[6px]">
            <div className="flex flex-1 flex-col rounded-t-[232px] rounded-b-[208px] border-x border-b-2 border-[#5d5759] bg-[#ebecee] pl-[46px] pr-[49px] shadow-[inset_0_0_36px_22px_#f4f4f6]">
              <div className="pb-[39px] pt-[78px]">
                <div className="grid grid-cols-[1fr_316px_1fr] items-center">
                  <div className="pl-[167px]">
                    <Camera />
                  </div>
                  <div className="h-7 rounded-full border-b-2 border-[#f7f8f9] bg-linear-to-b from-[#9ba5b0] via-[#cdd3d9] via-40% to-[#dde1e6] shadow-[0_4px_3px_#dadcdf]" />
                </div>
                <div className="mx-auto mt-[72px] h-12 w-28 rounded-full bg-[#1b1c20]" />
              </div>

              <div className="flex flex-1 flex-col bg-[#151618]">
                <StatusBar />
                <main className="flex-1 px-[60px]">
                  <header className="grid grid-cols-[1fr_auto_1fr] items-center px-[13px] pb-[31px] pt-[73px]">
                    <button
                      type="button"
                      aria-label="Back"
                      className="flex size-[124px] items-center justify-center rounded-[30px] bg-[#bbf246]"
                    >
                      <svg width="24" height="38" viewBox="0 0 24 38" fill="none" stroke="#2a2a2a" strokeWidth="6">
                        <path d="M21 2L5 19l16 17" />
                      </svg>
                    </button>
                    <h1 className="pt-[18px] text-[62px] font-semibold leading-[72px] text-[#ebebeb]">13 June 2024 at 23:42</h1>
                  </header>
                  <RouteMap />
                </main>
                <div className="flex h-[72px] items-center justify-center bg-black">
                  <div className="h-3 w-[324px] rounded-full bg-[#ebebeb]" />
                </div>
              </div>

              <div className="h-[338px]" />
            </div>
          </div>
        </div>
      </div>
    </div>
  );
}
